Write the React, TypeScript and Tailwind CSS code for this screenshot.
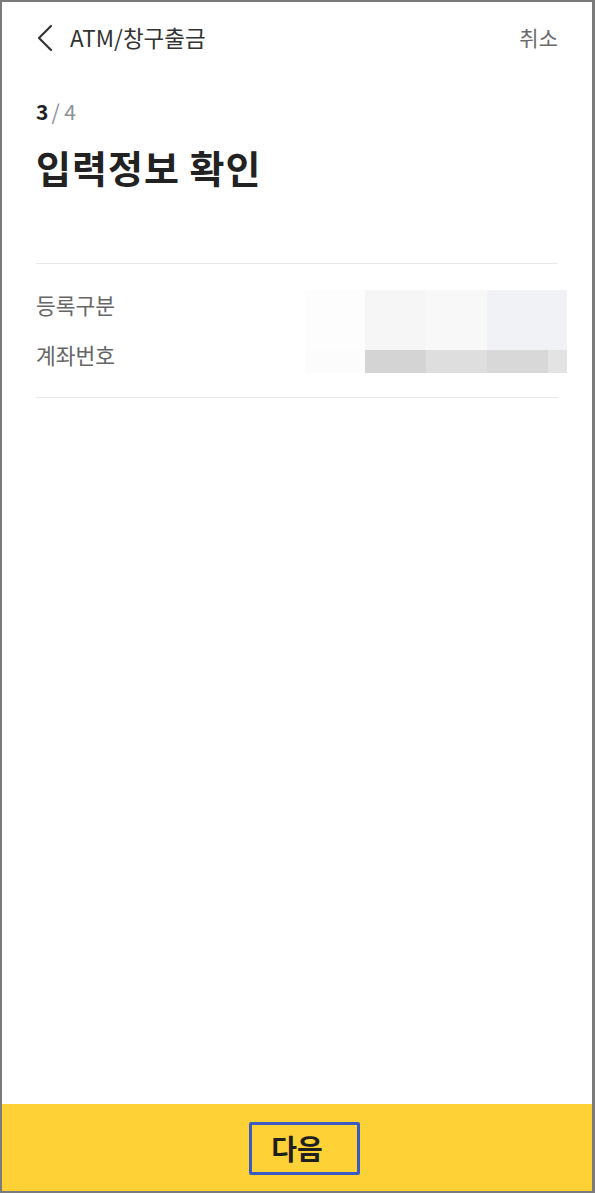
import React from 'react';

const font = { fontFamily: '"Noto Sans CJK KR", "Noto Sans", sans-serif' };

function BackIcon() {
    return (
        <svg width="18" height="28" viewBox="0 0 18 28" fill="none">
            <path d="M15 2 L3 14 L15 26" stroke="#333" strokeWidth="2.2" strokeLinecap="round" strokeLinejoin="round" />
        </svg>
    );
}

// blurred-out value area
function Mosaic() {
    return (
        <div className="flex flex-col w-[262px] -mr-[9px]">
            <div className="flex h-[60px]">
                <div className="w-[60px] bg-[#fdfdfd]" />
                <div className="w-[61px] bg-[#f6f6f7]" />
                <div className="w-[61px] bg-[#f8f8f8]" />
                <div className="w-[80px] bg-[#f0f2f5]" />
            </div>
            <div className="flex h-[23px]">
                <div className="w-[60px] bg-[#fcfcfc]" />
                <div className="w-[61px] bg-[#d4d4d4]" />
                <div className="w-[61px] bg-[#dedede]" />
                <div className="w-[61px] bg-[#d8d8d8]" />
                <div className="w-[19px] bg-[#e3e3e3]" />
            </div>
        </div>
    );
}

export default function App() {
    return (
        <div
            className="w-[595px] h-[1193px] bg-white border-[#7b7b7b] border-t-2 border-l-2 border-b-2 border-r-[3px] flex flex-col"
            style={font}
        >
            {/* Header */}
            <header className="h-[72px] flex items-center pl-[34px] pr-[34px]">
                <div className="flex items-center gap-[16px]">
                    <BackIcon />
                    <span className="text-[22.5px] text-[#333]">ATM/창구출금</span>
                </div>
                <span className="ml-auto text-[21px] text-[#6b6b6b]">취소</span>
            </header>

            <div className="flex-1 px-[34px]">
                <div className="pt-[22px] text-[21px] leading-[30px]">
                    <span className="font-bold text-[#222]">3</span>
                    <span className="ml-[3px] text-[#8c9199]">/ 4</span>
                </div>
                <h1 className="mt-[16px] text-[38px] leading-[50px] font-bold text-[#222] tracking-[1px]">입력정보 확인</h1>

                <div className="mt-[71px] border-t border-[#e8e8e8]" />
                <section className="flex pt-[26px] pb-[24px]">
                    <div className="flex flex-col gap-[20px] text-[21.5px] leading-[30px] text-[#666]">
                        <span>등록구분</span>
                        <span>계좌번호</span>
                    </div>
                    <div className="ml-auto">
                        <Mosaic />
                    </div>
                </section>
                <div className="border-t border-[#e8e8e8]" />
            </div>

            {/* Bottom button */}
            <div className="relative h-[87px] bg-[#fed236] flex items-center justify-center">
                <span className="text-[28px] font-bold text-[#1f1f1f]">다음</span>
                <div className="absolute left-[247px] top-[18px] w-[111px] h-[53px] border-[3px] border-[#3b5bc4] rounded-[2px]" />
            </div>
        </div>
    );
}
